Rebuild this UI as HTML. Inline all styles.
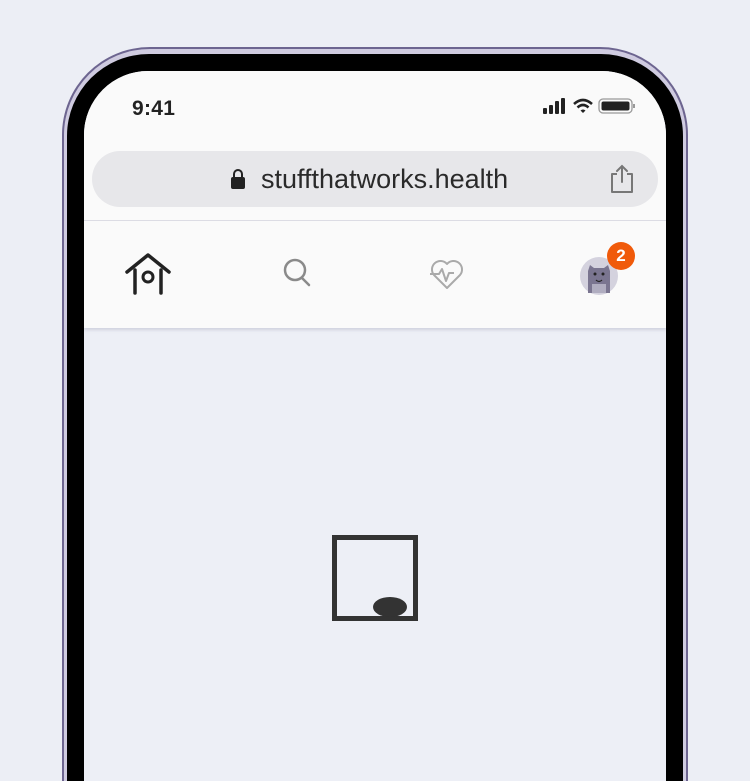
<!DOCTYPE html>
<html><head><meta charset="utf-8"><style>
html,body{margin:0;padding:0;width:750px;height:781px;overflow:hidden;background:#eceef5;font-family:"Liberation Sans",sans-serif}
.wrap{position:relative;width:750px;height:781px;overflow:hidden}
.frame{position:absolute;left:62px;top:47px;width:626px;height:760px;border-radius:88px 88px 0 0;background:#cfcbe0;border:2px solid #6d6590;border-bottom:none;box-sizing:border-box}
.bezel{position:absolute;left:67px;top:54px;width:616px;height:750px;border-radius:82px 82px 0 0;background:#000}
.screen{position:absolute;left:84px;top:71px;width:582px;height:730px;border-radius:64px 64px 0 0;background:#edeff6;overflow:hidden}
.head{position:absolute;left:0;top:0;width:582px;height:257px;background:#fafafa;box-shadow:0 2px 3px rgba(120,120,150,.25)}
.time{position:absolute;left:48px;top:26px;font-size:21px;font-weight:bold;color:#222;letter-spacing:.3px}
.url{position:absolute;left:8px;top:80px;width:566px;height:56px;border-radius:28px;background:#e7e7ea}
.url span{position:absolute;left:169px;top:13px;font-size:27px;color:#2a2a2a}
.div{position:absolute;left:0;top:149px;width:582px;height:1px;background:#dcdce4}
.badge{position:absolute;left:523px;top:171px;width:28px;height:28px;border-radius:50%;background:#f05a0a;color:#fff;font-weight:bold;font-size:17px;text-align:center;line-height:28px}
</style></head><body><div class="wrap">
<div class="frame"></div>
<div class="bezel"></div>
<div class="screen">
 <div class="head">
  <div class="time">9:41</div>
  <svg style="position:absolute;left:458px;top:26px" width="100" height="20">
   <rect x="1" y="11" width="4" height="6" rx="1" fill="#222"/><rect x="7" y="8" width="4" height="9" rx="1" fill="#222"/><rect x="13" y="4" width="4" height="13" rx="1" fill="#222"/><rect x="19" y="1" width="4" height="16" rx="1" fill="#222"/>
   <path d="M32 7 Q41 -1 50 7" stroke="#222" stroke-width="2.6" fill="none"/><path d="M35.5 10.5 Q41 5.5 46.5 10.5" stroke="#222" stroke-width="2.6" fill="none"/><path d="M38.5 13.5 L41 16 L43.5 13.5 Q41 11.5 38.5 13.5Z" fill="#222"/>
   <rect x="57" y="2" width="33" height="14" rx="4" fill="none" stroke="#999" stroke-width="1.3"/><rect x="59.5" y="4.5" width="28" height="9" rx="2" fill="#222"/><rect x="91" y="7" width="2" height="4" fill="#999"/>
  </svg>
  <div class="url">
   <svg style="position:absolute;left:138px;top:17px" width="16" height="22"><path d="M4 9 V6 a4 4 0 0 1 8 0 V9" stroke="#222" stroke-width="2" fill="none"/><rect x="1" y="9" width="14" height="12" rx="2" fill="#222"/></svg>
   <span>stuffthatworks.health</span>
   <svg style="position:absolute;left:516px;top:13px" width="28" height="30"><path d="M9 10 H4 V28 H24 V10 H19" stroke="#777" stroke-width="2" fill="none" stroke-linejoin="round"/><path d="M14 18 V2 M9 7 L14 2 L19 7" stroke="#777" stroke-width="2" fill="none" stroke-linecap="round"/></svg>
  </div>
  <div class="div"></div>
  <svg style="position:absolute;left:40px;top:181px" width="50" height="45"><path d="M3 20 L24 3 L45 20" stroke="#222" stroke-width="3.5" fill="none" stroke-linecap="round" stroke-linejoin="round"/><path d="M11 18 V41 M37 18 V41" stroke="#222" stroke-width="3.5" stroke-linecap="round"/><circle cx="24" cy="25" r="5" stroke="#222" stroke-width="3" fill="none"/></svg>
  <svg style="position:absolute;left:198px;top:186px" width="32" height="34"><circle cx="13" cy="13" r="10" stroke="#8a8a8a" stroke-width="2.5" fill="none"/><path d="M20 21 L27 28" stroke="#8a8a8a" stroke-width="2.5" stroke-linecap="round"/></svg>
  <svg style="position:absolute;left:345px;top:186px" width="36" height="34"><path d="M18 31 L5 18 A8 8 0 0 1 18 7 A8 8 0 0 1 31 18 Z" stroke="#aaa" stroke-width="2" fill="none" stroke-linejoin="round"/><path d="M1 17 H10 L13 12 L17 24 L20 16 H25" stroke="#aaa" stroke-width="2" fill="none" stroke-linejoin="round"/></svg>
  <svg style="position:absolute;left:496px;top:186px" width="40" height="40"><circle cx="19" cy="19" r="19" fill="#d4d2de"/><path d="M8 36 V14 L10 8 L14 11 H24 L28 8 L30 14 V36 Z" fill="#7a7590"/><circle cx="15" cy="17" r="1.5" fill="#222"/><circle cx="23" cy="17" r="1.5" fill="#222"/><path d="M16 23 Q19 26 22 23" stroke="#222" stroke-width="1.2" fill="none"/><rect x="12" y="27" width="14" height="9" fill="#b0adc0"/></svg>
  <div class="badge">2</div>
 </div>
 <svg style="position:absolute;left:248px;top:464px" width="88" height="88"><rect x="2.5" y="2.5" width="81" height="81" fill="none" stroke="#333" stroke-width="5"/><ellipse cx="58" cy="72" rx="17" ry="10" fill="#333"/></svg>
</div>
</div></body></html>
